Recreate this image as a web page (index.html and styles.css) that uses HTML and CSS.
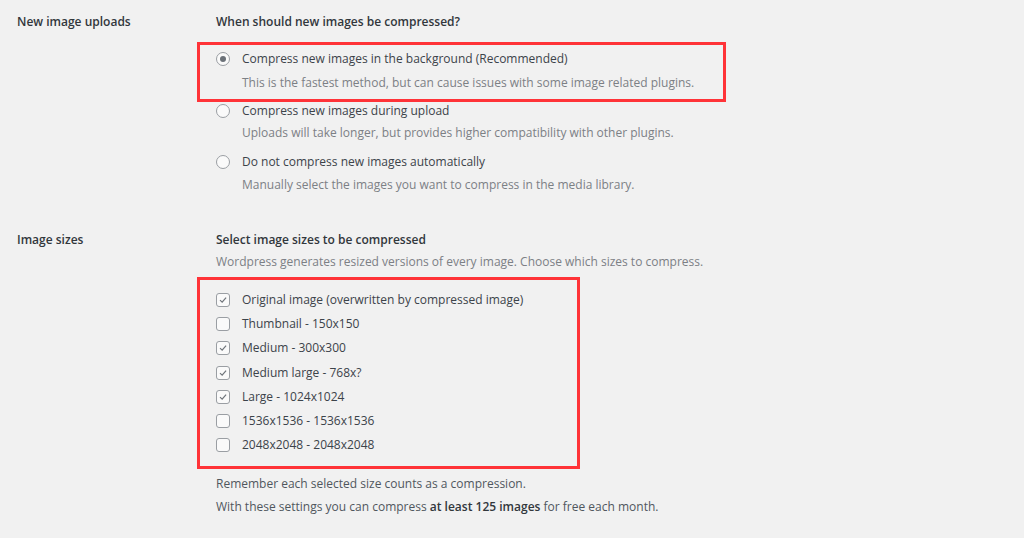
FILE: index.html
```html
<!DOCTYPE html>
<html>
<head>
<meta charset="utf-8">
<link rel="stylesheet" href="styles.css">
</head>
<body>
<div class="page">
  <div class="section">
    <div class="label">New image uploads</div>
    <div class="content">
      <div class="heading">When should new images be compressed?</div>
      <div class="box box-uploads">
        <div class="option boxed">
          <div class="line"><span class="radio checked"></span><span>Compress new images in the background (Recommended)</span></div>
          <div class="desc">This is the fastest method, but can cause issues with some image related plugins.</div>
        </div>
      </div>
      <div class="option after-box">
        <div class="line"><span class="radio"></span><span>Compress new images during upload</span></div>
        <div class="desc">Uploads will take longer, but provides higher compatibility with other plugins.</div>
      </div>
      <div class="option last">
        <div class="line"><span class="radio"></span><span>Do not compress new images automatically</span></div>
        <div class="desc">Manually select the images you want to compress in the media library.</div>
      </div>
    </div>
  </div>
  <div class="section sizes">
    <div class="label">Image sizes</div>
    <div class="content">
      <div class="heading">Select image sizes to be compressed</div>
      <div class="desc intro">Wordpress generates resized versions of every image. Choose which sizes to compress.</div>
      <div class="box box-sizes">
        <div class="check-row"><span class="checkbox checked"><svg viewBox="0 0 14 14"><path d="M3.5 7.2 L6 9.6 L10.6 4.2"/></svg></span><span>Original image (overwritten by compressed image)</span></div>
        <div class="check-row"><span class="checkbox"></span><span>Thumbnail - 150x150</span></div>
        <div class="check-row"><span class="checkbox checked"><svg viewBox="0 0 14 14"><path d="M3.5 7.2 L6 9.6 L10.6 4.2"/></svg></span><span>Medium - 300x300</span></div>
        <div class="check-row"><span class="checkbox checked"><svg viewBox="0 0 14 14"><path d="M3.5 7.2 L6 9.6 L10.6 4.2"/></svg></span><span>Medium large - 768x?</span></div>
        <div class="check-row"><span class="checkbox checked"><svg viewBox="0 0 14 14"><path d="M3.5 7.2 L6 9.6 L10.6 4.2"/></svg></span><span>Large - 1024x1024</span></div>
        <div class="check-row"><span class="checkbox"></span><span>1536x1536 - 1536x1536</span></div>
        <div class="check-row"><span class="checkbox"></span><span>2048x2048 - 2048x2048</span></div>
      </div>
      <div class="note first">Remember each selected size counts as a compression.</div>
      <div class="note">With these settings you can compress <strong>at least 125 images</strong> for free each month.</div>
    </div>
  </div>
</div>
</body>
</html>
```

FILE: styles.css
```css
html, body {
  margin: 0;
  padding: 0;
  background: #f1f1f1;
}
body {
  font-family: "Open Sans", "Noto Sans", sans-serif;
  font-size: 12px;
  color: #3c434a;
  width: 1024px;
  height: 538px;
  overflow: hidden;
}
.page {
  padding: 12px 0 0 17px;
}
.section {
  display: grid;
  grid-template-columns: 199px 1fr;
}
.sizes {
  margin-top: 35px;
}
.label, .heading {
  font-weight: 600;
  line-height: 20px;
  color: #32373c;
}
.content {
  display: flex;
  flex-direction: column;
  align-items: flex-start;
}
.box {
  border: 3px solid #ff3338;
  box-sizing: border-box;
  margin-left: -19px;
  padding-left: 16px;
}
.box-uploads {
  width: 529px;
  margin-top: 10px;
  padding-top: 4px;
  padding-bottom: 6px;
}
.option {
  margin-bottom: 9px;
}
.option.boxed {
  margin-bottom: 0;
}
.option.boxed .desc {
  margin-top: 4px;
}
.option.after-box {
  margin-top: -1px;
}
.option.after-box .desc {
  margin-top: 2px;
}
.option.last {
  margin-bottom: 0;
}
.line {
  display: flex;
  align-items: center;
  line-height: 20px;
  height: 20px;
}
.desc {
  color: #7c8085;
  line-height: 20px;
  margin-top: 3px;
  padding-left: 26px;
}
.desc.intro {
  padding-left: 0;
  margin-top: 2px;
}
.radio {
  width: 12px;
  height: 12px;
  border: 1px solid #9a9ea3;
  border-radius: 50%;
  background: #fafafa;
  margin-right: 12px;
  display: flex;
  align-items: center;
  justify-content: center;
  flex: none;
}
.radio.checked::after {
  content: "";
  width: 6px;
  height: 6px;
  border-radius: 50%;
  background: #6b7178;
}
.box-sizes {
  width: 383px;
  margin-top: 5px;
  padding-top: 8px;
  padding-bottom: 9px;
}
.check-row {
  display: flex;
  align-items: center;
  height: 24.2px;
  line-height: 24px;
}
.checkbox {
  width: 12px;
  height: 12px;
  border: 1px solid #9a9ea3;
  border-radius: 3px;
  background: #fafafa;
  margin-right: 12px;
  flex: none;
  display: flex;
}
.checkbox svg {
  width: 12px;
  height: 12px;
}
.checkbox path {
  fill: none;
  stroke: #70757b;
  stroke-width: 1.4;
}
.note {
  line-height: 20px;
  color: #50575e;
  margin-top: 3px;
}
.note.first {
  margin-top: 5px;
}
.note strong {
  font-weight: 600;
  color: #32373c;
}
```
